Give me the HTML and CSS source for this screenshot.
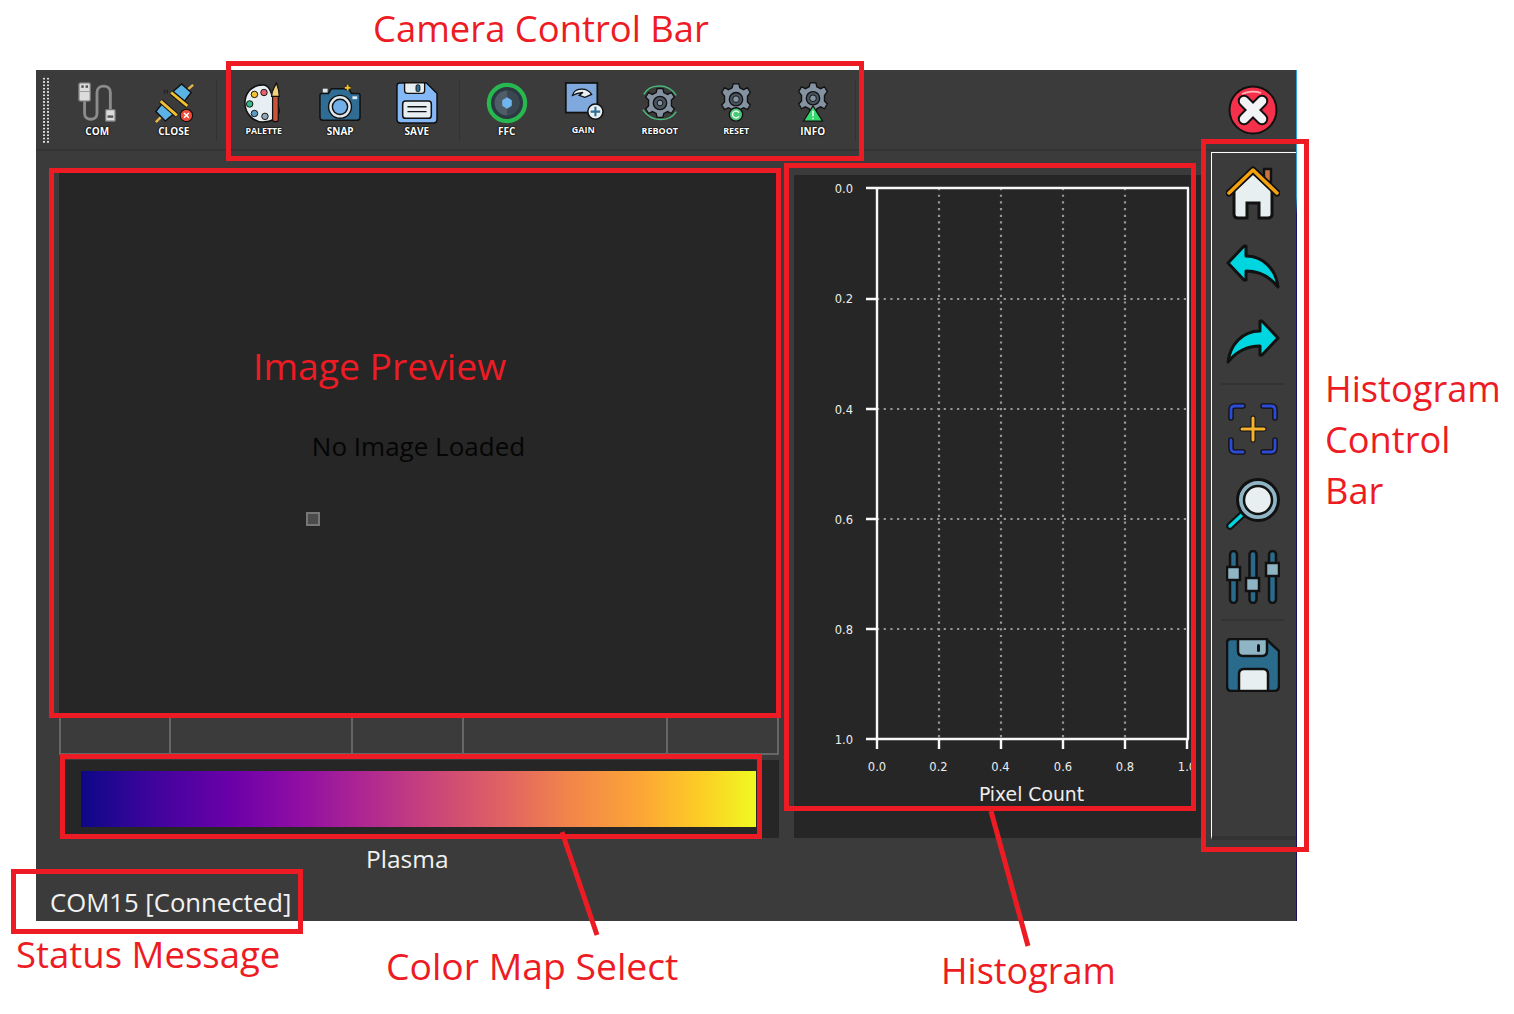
FILE: index.html
```html
<!DOCTYPE html>
<html lang="en">
<head>
<meta charset="utf-8">
<title>Thermal Camera Viewer</title>
<link rel="stylesheet" href="styles.css">
</head>
<body>
<div class="canvas">
  <div class="app">
    <header class="toolbar">
      <div class="grip"></div>
      <div class="tool">
        <svg class="ticon" viewBox="0 0 44 44"><path d="M9 20V33C9 41 22 41 22 33V11C22 2 36 2 36 11V30" fill="none" stroke="#8c8c8c" stroke-width="3"/><rect x="3" y="1" width="12" height="19" rx="1.500" fill="#dcdcdc" stroke="#777" stroke-width="1.400"/><rect x="5.500" y="3.500" width="2.600" height="2.600" fill="#555"/><rect x="10" y="3.500" width="2.600" height="2.600" fill="#555"/><path d="M3 10H15" stroke="#999"/><rect x="31" y="29" width="10" height="12" rx="1" fill="#dcdcdc" stroke="#777" stroke-width="1.400"/><rect x="33" y="35" width="6" height="2.500" fill="#555"/></svg>
        <span class="tlabel">COM</span>
      </div>
      <div class="tool">
        <svg class="ticon" viewBox="0 0 44 44"><path d="M3 42L9 36M35 9L42 3" stroke="#e5b44a" stroke-width="2.600"/><path d="M21 10L30 2 40 11 33 20Z" fill="#5ab3e4" stroke="#111" stroke-width="1.500"/><path d="M19 11L36 25" stroke="#111" stroke-width="5"/><path d="M19 11L36 25" stroke="#f0c030" stroke-width="3"/><path d="M10 22L22 33 13 41 3 31Z" fill="#5ab3e4" stroke="#111" stroke-width="1.500"/><path d="M8 20L25 35" stroke="#111" stroke-width="5"/><path d="M8 20L25 35" stroke="#f0c030" stroke-width="3"/><circle cx="35" cy="35" r="6.500" fill="#ee4b3a" stroke="#111" stroke-width="1.200"/><path d="M32.500 32.500L37.500 37.500M37.500 32.500L32.500 37.500" stroke="#fff" stroke-width="1.600"/><path d="M12 8V12M15 8V12" stroke="#222" stroke-width="1.500"/></svg>
        <span class="tlabel">CLOSE</span>
      </div>
      <div class="sep"></div>
      <div class="tool">
        <svg class="ticon" viewBox="0 0 44 44"><path d="M21 3C9 3 2 12 2 22S10 42 21 42C31 42 36 37 38 31 39 27 36 24 33 21 30 16 30 4 21 3Z" fill="#e8eff3" stroke="#111" stroke-width="1.600"/><circle cx="22" cy="11" r="3.400" fill="#e8606e" stroke="#111"/><circle cx="12" cy="13" r="3.400" fill="#f2c230" stroke="#111"/><circle cx="7" cy="23" r="3.400" fill="#35b78c" stroke="#111"/><circle cx="12" cy="33" r="3.400" fill="#5c9cc4" stroke="#111"/><circle cx="23" cy="36" r="3.400" fill="#8fa6b5" stroke="#111"/><path d="M31 15H37V40C37 42 31 42 31 40Z" fill="#c8553a" stroke="#111" stroke-width="1.300"/><path d="M30 15C30 8 33 6 35 1 37 6 38 9 38 15Z" fill="#f2d27a" stroke="#111" stroke-width="1.300"/></svg>
        <span class="tlabel small">PALETTE</span>
      </div>
      <div class="tool">
        <svg class="ticon" viewBox="0 0 44 44"><path d="M3 12H10L13 7H31L34 12H41Q43 12 43 14V37Q43 40 40 40H4Q1 40 1 37V14Q1 12 3 12Z" fill="#2f6d95" stroke="#111" stroke-width="1.600"/><circle cx="22" cy="26" r="12" fill="#dfe8ee" stroke="#111" stroke-width="1.500"/><circle cx="22" cy="26" r="8" fill="#72aee8" stroke="#111" stroke-width="1.500"/><rect x="4" y="7" width="5" height="4" fill="#dfe8ee"/><rect x="35" y="15" width="5" height="3" fill="#dfe8ee"/><path d="M27 6H33M30 3V9" stroke="#111" stroke-width="4"/><path d="M27 6H33M30 3V9" stroke="#f2c230" stroke-width="2"/></svg>
        <span class="tlabel">SNAP</span>
      </div>
      <div class="tool">
        <svg class="ticon" viewBox="0 0 44 44"><path d="M4 1H32L43 12V39Q43 43 39 43H5Q1 43 1 39V4Q1 1 4 1Z" fill="#84b8f6" stroke="#111" stroke-width="1.600"/><path d="M9 1H30V9Q30 12 27 12H12Q9 12 9 9Z" fill="#e8eff3" stroke="#111" stroke-width="1.400"/><rect x="21" y="3" width="4" height="7" rx="1.500" fill="#2f6d95" stroke="#111"/><rect x="7" y="20" width="30" height="18" rx="3" fill="#e8eff3" stroke="#111" stroke-width="1.600"/><path d="M12 26H32M12 31H32" stroke="#111" stroke-width="1.500"/></svg>
        <span class="tlabel">SAVE</span>
      </div>
      <div class="sep"></div>
      <div class="tool">
        <svg class="ticon" viewBox="0 0 44 44"><circle cx="22" cy="22" r="19" fill="#2d3942" stroke="#27b84f" stroke-width="4.400"/><circle cx="22" cy="22" r="13" fill="#4f5d68"/><path d="M22 9A13 13 0 0 1 22 35Z" fill="#3a4650"/><path d="M22 16L27 19V25L22 28 17 25V19Z" fill="#6fb5f0"/></svg>
        <span class="tlabel">FFC</span>
      </div>
      <div class="tool">
        <svg class="ticon" viewBox="0 0 44 44"><rect x="4" y="1" width="33" height="31" fill="#7fa8dc" stroke="#111" stroke-width="1.800"/><path d="M11 14C13 6 26 5 31 13L24 16 18 14 22 11 16 12Z" fill="#e8eff3" stroke="#111" stroke-width="1.400"/><circle cx="35" cy="31" r="8" fill="#e8eff3" stroke="#111" stroke-width="1.600"/><path d="M35 26V36M30 31H40" stroke="#2f6d95" stroke-width="2.200"/></svg>
        <span class="tlabel up">GAIN</span>
      </div>
      <div class="tool">
        <svg class="ticon" viewBox="0 0 44 44"><path d="M5 13C11 2 30 0 39 14M39 31C32 42 13 43 4 29" fill="none" stroke="#48b878" stroke-width="1.600"/><path d="M19 7H25L26 11 30 13 34 11 37 16 34 19V25L37 28 34 33 30 31 26 33 25 37H19L18 33 14 31 10 33 7 28 10 25V19L7 16 10 11 14 13 18 11Z" fill="#8492a1" stroke="#111" stroke-width="1.400"/><circle cx="22" cy="22" r="7" fill="#48545f" stroke="#111" stroke-width="1.400"/><circle cx="22" cy="22" r="3" fill="#8492a1" stroke="#111"/></svg>
        <span class="tlabel tiny">REBOOT</span>
      </div>
      <div class="tool">
        <svg class="ticon" viewBox="0 0 44 44"><path d="M19 2H25L26 6 30 8 34 6 37 11 34 15V21L37 24 34 29 30 27 26 29 25 33H19L18 29 14 27 10 29 7 24 10 21V15L7 11 10 6 14 8 18 6Z" fill="#8492a1" stroke="#111" stroke-width="1.400"/><circle cx="22" cy="18" r="7" fill="#48545f" stroke="#111" stroke-width="1.400"/><circle cx="22" cy="18" r="3.500" fill="#8492a1" stroke="#111"/><circle cx="22" cy="34" r="7" fill="#48c878" stroke="#111" stroke-width="1.400"/><path d="M25 36A3.600 3.600 0 1 1 25 32" fill="none" stroke="#fff" stroke-width="1.300"/></svg>
        <span class="tlabel tiny">RESET</span>
      </div>
      <div class="tool">
        <svg class="ticon" viewBox="0 0 44 44"><path d="M19 1H25L26 5 30 7 34 5 37 10 34 14V20L37 23 34 28 30 26 26 28 25 32H19L18 28 14 26 10 28 7 23 10 20V14L7 10 10 5 14 7 18 5Z" fill="#8492a1" stroke="#111" stroke-width="1.400"/><circle cx="22" cy="17" r="7" fill="#48545f" stroke="#111" stroke-width="1.400"/><circle cx="22" cy="17" r="3.500" fill="#8492a1" stroke="#111"/><path d="M22 25L32 41H12Z" fill="#34d86c" stroke="#111" stroke-width="1.200"/><path d="M22 30V36M22 37.500V39" stroke="#fff" stroke-width="1.500"/></svg>
        <span class="tlabel">INFO</span>
      </div>
      <div class="sep"></div>
      <svg class="closebtn" viewBox="0 0 50 50"><circle cx="25" cy="25" r="23.500" fill="#f5304a" stroke="#111" stroke-width="2"/><path d="M14 9C20 6 28 6 33 8" fill="none" stroke="#fbb" stroke-width="1.600"/><path d="M16 16L34 34M34 16L16 34" stroke="#111" stroke-width="12.500" stroke-linecap="round"/><path d="M16 16L34 34M34 16L16 34" stroke="#f2f4f5" stroke-width="8.500" stroke-linecap="round"/></svg>
    </header>
    <div class="workspace">
      <section class="leftcol">
        <div class="preview">
          <span class="noimage">No Image Loaded</span>
          <span class="handle"></span>
        </div>
        <div class="cells">
          <div class="cell"></div><div class="cell"></div><div class="cell"></div><div class="cell"></div><div class="cell"></div>
        </div>
        <div class="cmap"><div class="plasma"></div></div>
      </section>
      <section class="histpanel">
        <svg class="chart" viewBox="0 0 400 663">
          <g class="grid">
            <path d="M145 13V564M207 13V564M269 13V564M331 13V564"/>
            <path d="M83 124H392M83 234H392M83 344H392M83 454H392"/>
          </g>
          <g class="axes">
            <path d="M83 13V574M394 13V564M72 13H395M72 564H395"/>
            <path d="M72 124H83M72 234H83M72 344H83M72 454H83"/>
            <path d="M145 564V574M207 564V574M269 564V574M331 564V574M393 564V574"/>
          </g>
          <g class="yt">
            <text x="59" y="18">0.0</text><text x="59" y="128">0.2</text><text x="59" y="239">0.4</text><text x="59" y="349">0.6</text><text x="59" y="459">0.8</text><text x="59" y="569">1.0</text>
          </g>
          <g class="xt">
            <text x="83" y="596">0.0</text><text x="144.500" y="596">0.2</text><text x="206.500" y="596">0.4</text><text x="269" y="596">0.6</text><text x="331" y="596">0.8</text><text x="393" y="596">1.0</text>
          </g>
          <text class="xlabel" x="237.500" y="626">Pixel Count</text>
        </svg>
      </section>
      <aside class="sidebar">
        <svg class="sicon" viewBox="0 0 54 54"><path d="M38 3H45V16H38Z" fill="#c9743e" stroke="#111" stroke-width="2.400"/><path d="M8 24V48Q8 52 12 52H21V37H33V52H42Q46 52 46 48V24L27 7Z" fill="#e8eff0" stroke="#111" stroke-width="3"/><path d="M3 27L27 4 51 27" fill="none" stroke="#111" stroke-width="7" stroke-linecap="round" stroke-linejoin="round"/><path d="M3 27L27 4 51 27" fill="none" stroke="#f6a20f" stroke-width="3.500" stroke-linecap="round" stroke-linejoin="round"/></svg>
        <svg class="sicon" viewBox="0 1 54 54"><path d="M2 24L18 7 20 7V17C38 17 50 31 52 48 44 38 34 32 20 32V41H18Z" fill="#00d6e0" stroke="#111" stroke-width="3" stroke-linejoin="round"/></svg>
        <svg class="sicon mirror" viewBox="0 0 54 54"><path d="M2 24L18 7 20 7V17C38 17 50 31 52 48 44 38 34 32 20 32V41H18Z" fill="#00d6e0" stroke="#111" stroke-width="3" stroke-linejoin="round"/></svg>
        <div class="vsep first"></div>
        <svg class="sicon" viewBox="0 0 54 54"><g fill="none" stroke="#111" stroke-width="5.500" stroke-linecap="round"><path d="M5 16V8Q5 4 9 4H17M37 4H45Q49 4 49 8V16M5 38V46Q5 50 9 50H17M37 50H45Q49 50 49 46V38"/></g><g fill="none" stroke="#2c4bd6" stroke-width="2.800" stroke-linecap="round"><path d="M5 16V8Q5 4 9 4H17M37 4H45Q49 4 49 8V16M5 38V46Q5 50 9 50H17M37 50H45Q49 50 49 46V38"/></g><path d="M27 16V38M16 27H38" stroke="#111" stroke-width="5" stroke-linecap="round"/><path d="M27 16V38M16 27H38" stroke="#f6b12d" stroke-width="3" stroke-linecap="round"/></svg>
        <svg class="sicon" viewBox="0 0 54 54"><path d="M4 50L18 37" stroke="#111" stroke-width="7.500" stroke-linecap="round"/><path d="M4 50L18 37" stroke="#00d6e0" stroke-width="3.500" stroke-linecap="round"/><circle cx="32" cy="24" r="20.500" fill="#8fb5c5" stroke="#111" stroke-width="3"/><circle cx="32" cy="24" r="14" fill="#e8eff0" stroke="#111" stroke-width="2.500"/></svg>
        <svg class="sicon" viewBox="0 0 54 54"><g fill="#2a6a8a" stroke="#111" stroke-width="2.500"><rect x="4" y="1" width="7" height="52" rx="3.500"/><rect x="23.500" y="1" width="7" height="52" rx="3.500"/><rect x="43" y="1" width="7" height="52" rx="3.500"/></g><g fill="#8fb5c5" stroke="#111" stroke-width="2.500"><rect x="1" y="17" width="13" height="13"/><rect x="20" y="28" width="13" height="13"/><rect x="40" y="13" width="13" height="13"/></g></svg>
        <div class="vsep second"></div>
        <svg class="sicon" viewBox="0 0 54 54"><path d="M5 1H40L53 13V48Q53 53 48 53H5Q1 53 1 48V5Q1 1 5 1Z" fill="#2a6a8a" stroke="#111" stroke-width="2.500"/><path d="M12 1H41V13Q41 18 36 18H17Q12 18 12 13Z" fill="#8fb5c5" stroke="#111" stroke-width="2.500"/><rect x="31" y="6" width="3" height="8" rx="1.500" fill="#111"/><path d="M13 53V36Q13 31 18 31H37Q42 31 42 36V53Z" fill="#e8eff0" stroke="#111" stroke-width="2.500"/></svg>
      </aside>
    </div>
    <footer class="footer">
      <div class="cmapname">Plasma</div>
      <div class="status">COM15 [Connected]</div>
    </footer>
  </div>

  <div class="box box-camera"></div>
  <div class="box box-preview"></div>
  <div class="box box-hist"></div>
  <div class="box box-side"></div>
  <div class="box box-cmap"></div>
  <div class="box box-status"></div>
  <svg class="leaders" viewBox="0 0 1514 1014"><path d="M562 832L597 935M991 811L1028 946"/></svg>

  <div class="note n-camera">Camera Control Bar</div>
  <div class="note n-preview">Image Preview</div>
  <div class="note n-side">Histogram<br>Control<br>Bar</div>
  <div class="note n-status">Status Message</div>
  <div class="note n-cmap">Color Map Select</div>
  <div class="note n-hist">Histogram</div>
</div>
</body>
</html>
```

FILE: styles.css
```css
* { box-sizing: border-box; }
html, body { margin: 0; padding: 0; background: #fff; }
.canvas { position: relative; width: 1514px; height: 1014px; overflow: hidden; font-family: "Open Sans", "Noto Sans", sans-serif; }

/* The application window sits on a free annotated canvas */
.app { position: absolute; left: 36px; top: 70px; width: 1261px; height: 851px; background: #3b3b3b; display: flex; flex-direction: column; border-right: 1px solid; border-image: linear-gradient(#2a9fd8 0, #2a9fd8 15%, #14146a 17%, #1c0f5c 100%) 1; }

.toolbar { height: 81px; flex: none; display: flex; align-items: center; border-bottom: 2px solid #333; padding-left: 6px; }
.grip { width: 7px; height: 66px; margin-right: 10px; flex: none; background-image: radial-gradient(circle, #ddd 0.9px, transparent 1.100px); background-size: 4px 3.330px; }
.tool { width: 76.500px; flex: none; height: 66px; display: flex; flex-direction: column; align-items: center; padding-top: 5px; }
.ticon { width: 42px; height: 42px; display: block; flex: none; }
.tlabel { font-size: 10px; font-weight: 700; color: #fff; line-height: 12px; margin-top: 1px; text-shadow: 0 0 2px #000, 0 0 1px #000, 0 0 1px #000; }
.tlabel.small { font-size: 8.800px; }
.tlabel.tiny { font-size: 9px; }
.tlabel.up { font-size: 9px; margin-top: 0; }
.sep { width: 1px; height: 62px; background: #333; margin: 0 8.500px 0 4px; flex: none; }
.closebtn { width: 50px; height: 50px; margin-left: auto; margin-right: 18px; flex: none; }

.workspace { flex: none; height: 688px; display: flex; padding-left: 23px; }
.leftcol { width: 720px; flex: none; padding-top: 18px; display: flex; flex-direction: column; }
.preview { height: 547px; width: 717px; background: #262626; position: relative; display: flex; align-items: center; justify-content: center; padding-top: 6px; }
.noimage { color: #050505; font-size: 26px; line-height: 34px; margin-left: 2px; }
.handle { position: absolute; left: 247px; top: 343px; width: 14px; height: 14px; background: #4b4b4b; border: 2px solid #777; }
.cells { height: 39px; display: grid; grid-template-columns: 110px 182px 111px 204px 113px; }
.cell { border-left: 2px solid #666; border-bottom: 2px solid #666; }
.cell:last-child { border-right: 2px solid #666; }
.cmap { height: 78px; margin-top: 5px; margin-left: 1px; background: #262626; padding: 11px 23px 11px 21px; }
.plasma { height: 56px; background: linear-gradient(90deg, #0d0887 0%, #41049d 11%, #6a00a8 22%, #8f0da4 32%, #b12a90 43%, #cc4778 53%, #e16462 63%, #f1844b 72%, #fca636 83%, #fcce25 92%, #f0f921 100%); }

.histpanel { width: 407px; flex: none; margin-left: 15px; margin-top: 24px; height: 663px; background: #262626; }
.chart { display: block; width: 400px; height: 663px; }
.grid path { fill: none; stroke: #969696; stroke-width: 2.200; stroke-dasharray: 2.200 4.470; }
.axes path { fill: none; stroke: #f8f8f8; stroke-width: 2.400; }
.chart text { font-family: "DejaVu Sans", sans-serif; fill: #eee; }
.yt text { font-size: 11.500px; text-anchor: end; }
.xt text { font-size: 11.500px; text-anchor: middle; }
.chart .xlabel { font-size: 18.800px; text-anchor: middle; }

.sidebar { margin-left: 10px; width: 85px; height: 688px; flex: none; border-top: 1px solid #fff; border-left: 1px solid #fff; border-bottom: 4px solid #333; display: flex; flex-direction: column; align-items: center; padding-top: 13px; margin-top: 1px; padding-right: 3px; }
.sicon { width: 54px; height: 54px; flex: none; margin-bottom: 20px; display: block; }
.sicon.mirror { transform: scaleX(-1); }
.vsep { width: 63px; height: 2px; background: #333; flex: none; }
.vsep.first { margin-top: -5px; margin-bottom: 17px; }
.vsep.second { margin-top: -5px; margin-bottom: 17px; }

.footer { flex: 1; display: flex; flex-direction: column; padding-left: 14px; color: #f2f2f2; }
.cmapname { font-size: 24.500px; line-height: 32px; padding-left: 316px; margin-top: 4px; }
.status { font-size: 25.700px; line-height: 36px; margin-top: 10px; }

/* Red annotation layer */
.box { position: absolute; border: 5px solid #ed1c24; }
.box-camera { left: 226px; top: 61px; width: 638px; height: 100px; }
.box-preview { left: 49px; top: 168px; width: 732px; height: 550px; }
.box-hist { left: 784px; top: 163px; width: 412px; height: 648px; }
.box-side { left: 1201px; top: 139px; width: 108px; height: 713px; }
.box-cmap { left: 60px; top: 754px; width: 702px; height: 85px; }
.box-status { left: 11px; top: 869px; width: 292px; height: 65px; }
.leaders { position: absolute; left: 0; top: 0; width: 1514px; height: 1014px; pointer-events: none; }
.leaders path { stroke: #ed1c24; stroke-width: 5; fill: none; }
.note { position: absolute; color: #ed1c24; font-size: 36px; line-height: 51px; white-space: nowrap; }
.n-camera { left: 373px; top: 3px; font-size: 36.400px; }
.n-preview { left: 253px; top: 340px; font-size: 37.300px; }
.n-side { left: 1325px; top: 363px; font-size: 36.200px; }
.n-status { left: 16px; top: 929px; font-size: 36.500px; }
.n-cmap { left: 386px; top: 940px; font-size: 37.300px; }
.n-hist { left: 941px; top: 945px; }
```
